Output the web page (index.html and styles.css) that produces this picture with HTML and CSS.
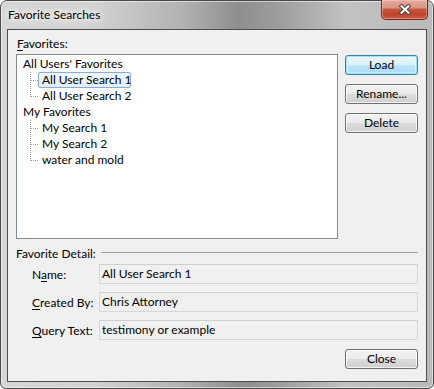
FILE: index.html
```html
<!DOCTYPE html>
<html>
<head>
<meta charset="utf-8">
<title>Favorite Searches</title>
<link rel="stylesheet" href="styles.css">
</head>
<body>
<div class="window">
  <div class="titlebar">
    <span class="title">Favorite Searches</span>
    <button class="close-x" aria-label="Close">
      <svg width="12" height="11" viewBox="0 0 12 11">
        <path d="M2.5 2.2 L9.5 8.8 M9.5 2.2 L2.5 8.8" stroke="#3c3c3c" stroke-width="3.9" stroke-linecap="square" fill="none"/>
        <path d="M2.5 2.2 L9.5 8.8 M9.5 2.2 L2.5 8.8" stroke="#ffffff" stroke-width="2.1" stroke-linecap="square" fill="none"/>
      </svg>
    </button>
  </div>
  <div class="client">
    <div class="fav-label"><u>F</u>avorites:</div>
    <div class="top-row">
      <div class="tree">
        <div class="node">All Users' Favorites</div>
        <div class="child"><span class="conn"></span><span class="item selected">All User Search 1</span></div>
        <div class="child"><span class="conn last"></span><span class="item">All User Search 2</span></div>
        <div class="node">My Favorites</div>
        <div class="child"><span class="conn"></span><span class="item">My Search 1</span></div>
        <div class="child"><span class="conn"></span><span class="item">My Search 2</span></div>
        <div class="child"><span class="conn last"></span><span class="item">water and mold</span></div>
      </div>
      <div class="buttons">
        <button class="btn default">Load</button>
        <button class="btn">Rename...</button>
        <button class="btn">Delete</button>
      </div>
    </div>
    <div class="group-head"><span class="group-title">Favorite Detail:</span><span class="rule"></span></div>
    <div class="field-row"><span class="field-label">N<u>a</u>me:</span><div class="field">All User Search 1</div></div>
    <div class="field-row"><span class="field-label"><u>C</u>reated By:</span><div class="field">Chris Attorney</div></div>
    <div class="field-row"><span class="field-label"><u>Q</u>uery Text:</span><div class="field">testimony or example</div></div>
    <div class="footer"><button class="btn">Close</button></div>
  </div>
</div>
</body>
</html>
```
FILE: styles.css
```css
* { box-sizing: border-box; }
html, body { margin: 0; padding: 0; background: #ffffff; }
body {
  font-family: Lato, "Noto Sans", sans-serif;
  font-size: 12px;
  color: #000;
  width: 434px;
  height: 389px;
  overflow: hidden;
}
u { text-decoration: underline; text-underline-offset: 2px; }

.window {
  width: 434px;
  height: 389px;
  border: 1px solid #4a4a4a;
  border-radius: 7px 7px 6px 6px;
  background:
    linear-gradient(to right, #d6d6d6 0%, #d2d2d2 22%, #b2b2b2 42%, #8e8e8e 55%, #9c9c9c 64%, #c2c2c2 80%, #bababa 100%);
  display: flex;
  flex-direction: column;
  padding: 0 6px 6px 6px;
  box-shadow: inset 0 0 0 1px rgba(255,255,255,0.55);
}

.titlebar {
  height: 28px;
  display: flex;
  align-items: flex-start;
  margin: 0 -6px;
  padding-left: 7px;
}
.title {
  padding-top: 6px;
  line-height: 15px;
  font-size: 12px;
  color: #000;
  text-shadow: 0 0 6px #fff, 0 0 8px #fff, 0 0 10px #fff;
}
.close-x {
  margin-left: auto;
  margin-right: 5px;
  margin-top: -1px;
  width: 47px;
  height: 20px;
  border: 1px solid #6b2a1e;
  border-top: none;
  border-radius: 0 0 5px 5px;
  background: linear-gradient(to bottom, #e6ab9c 0%, #d99482 40%, #c6563e 50%, #bf432d 75%, #cf5a40 100%);
  box-shadow: inset 0 0 0 1px rgba(255,210,200,0.45);
  padding: 0;
  display: flex;
  align-items: center;
  justify-content: center;
}

.client {
  flex: 1;
  border: 1px solid #4d4d4d;
  background: #f0f0f0;
  padding: 0 8px;
  display: flex;
  flex-direction: column;
}

.fav-label {
  margin-top: 6px;
  height: 15px;
  line-height: 15px;
  padding-left: 1px;
}

.top-row {
  margin-top: 3px;
  display: flex;
  gap: 7px;
}
.tree {
  width: 322px;
  height: 185px;
  border: 1px solid #828790;
  background: #fff;
  padding: 1px 0 0 6px;
}
.node { height: 16px; line-height: 16px; }
.child {
  height: 16px;
  display: flex;
  margin-left: 7px;
}
.conn {
  width: 8px;
  height: 16px;
  background:
    linear-gradient(to right, #a0a0a0 50%, transparent 50%) 1px 8px / 2px 1px repeat-x,
    linear-gradient(to bottom, #a0a0a0 50%, transparent 50%) 0 0 / 1px 2px repeat-y;
}
.conn.last {
  background:
    linear-gradient(#fff, #fff) 0 9px / 1px 7px no-repeat,
    linear-gradient(to right, #a0a0a0 50%, transparent 50%) 1px 8px / 2px 1px repeat-x,
    linear-gradient(to bottom, #a0a0a0 50%, transparent 50%) 0 0 / 1px 2px repeat-y;
}
.item {
  height: 16px;
  line-height: 14px;
  border: 1px solid transparent;
  padding: 0 3px 0 3px;
  white-space: nowrap;
}
.item.selected {
  border-color: #84acdd;
  border-radius: 2px;
  background: linear-gradient(to bottom, #f2f8fe 0%, #e2eefc 100%);
  width: 93px;
}

.buttons {
  display: flex;
  flex-direction: column;
  gap: 9px;
  margin-top: 1px;
}
.btn {
  font-family: inherit;
  font-size: 12px;
  color: #000;
  width: 73px;
  height: 20px;
  padding: 0;
  border: 1px solid #707070;
  border-radius: 3px;
  background: linear-gradient(to bottom, #f2f2f2 0%, #ebebeb 50%, #dddddd 50%, #cfcfcf 100%);
  box-shadow: inset 0 0 0 1px rgba(255,255,255,0.75);
  line-height: 16px;
}
.btn.default {
  border-color: #3c7fb1;
  background: linear-gradient(to bottom, #eaf6fd 0%, #d9f0fc 50%, #bee6fd 50%, #a7d9f5 100%);
  box-shadow: inset 0 0 0 1px #9de2fb, inset 0 0 0 2px rgba(255,255,255,0.4);
}

.group-head {
  margin-top: 7px;
  height: 15px;
  line-height: 15px;
  display: flex;
  align-items: center;
}
.rule {
  flex: 1;
  height: 1px;
  background: #a0a0a0;
  margin-left: 5px;
  margin-top: -3px;
}

.field-row {
  display: flex;
  align-items: center;
  margin-top: 8px;
  padding-left: 16px;
}
.group-head + .field-row { margin-top: 3px; }
.field-label {
  width: 67px;
  white-space: nowrap;
}
.field {
  flex: 1;
  height: 20px;
  line-height: 18px;
  border: 1px solid #d6d6d6;
  border-top-color: #cfcfcf;
  background: #f0f0f0;
  padding-left: 2px;
}

.footer {
  margin-top: 9px;
  display: flex;
  justify-content: flex-end;
}
```
